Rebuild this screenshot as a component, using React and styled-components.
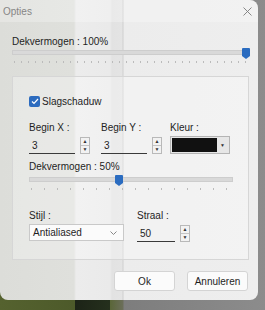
import React from 'react';
import styled, { createGlobalStyle } from 'styled-components'

const GlobalStyle = createGlobalStyle`
  html, body {
    margin: 0;
    padding: 0;
  }
  body {
    width: 265px;
    height: 310px;
    overflow: hidden;
    font-family: "Liberation Sans", Arial, sans-serif;
    background: linear-gradient(to right, #55622f 0, #4d5a2a 75px, #1c2317 75px, #25301d 110px, #5a6638 110px, #6b6e5a 123px, #7d7d7d 124px, #8c8c8c 100%);
  }
`

const Dialog = styled.div`
  width: 258px;
  height: 300px;
  border-radius: 0 8px 8px 8px;
  overflow: hidden;
  display: flex;
  flex-direction: column;
  background: linear-gradient(to right, #dcddd9 0, #dfe0dc 74px, #ececec 76px, #eaeaea 110px, #e2e2e2 112px, #e4e4e4 122px, #cfcfcf 123px, #ececec 124px, #eeeeee 100%);
`

const TitleBar = styled.div`
  height: 22px;
  flex: none;
  display: flex;
  align-items: center;
  justify-content: space-between;
  padding: 0 6px 0 3px;
  background: rgba(255, 255, 255, 0.25);
  color: #858585;
  font-size: 10px;
`

const CloseIcon = styled.svg`
  width: 9px;
  height: 9px;
  margin-top: 1px;
`

const Content = styled.div`
  flex: 1;
  display: flex;
  flex-direction: column;
  padding: 13px 10px 0 12px;
`

const Label = styled.div`
  font-size: 10px;
  line-height: 13px;
  color: #1e1e1e;
  white-space: nowrap;
`

const SliderWrap = styled.div`
  position: relative;
  width: ${p => p.$width}px;
  height: 16px;
  margin-top: 1px;
`

const Track = styled.div`
  height: 5px;
  background: #d9d9d9;
  border: 1px solid #cdcdcd;
  box-sizing: border-box;
  margin-top: 1px;
`

const Ticks = styled.div`
  height: 2px;
  margin: 6px 2px 0;
  background: repeating-linear-gradient(to right, #bbbbbb 0, #bbbbbb 1px, transparent 1px, transparent ${p => p.$step}px);
`

const Thumb = styled.svg`
  position: absolute;
  top: -1px;
  width: 8px;
  height: 11px;
`

const GroupBox = styled.div`
  margin-top: 11px;
  width: 237px;
  height: 184px;
  box-sizing: border-box;
  border: 1px solid #d6d6d6;
  background: rgba(255, 255, 255, 0.3);
  padding: 18px 0 0 16px;
  display: flex;
  flex-direction: column;
`

const CheckRow = styled.label`
  display: flex;
  align-items: center;
  gap: 2px;
  font-size: 10px;
  line-height: 13px;
  color: #1e1e1e;
`

const CheckBox = styled.span`
  width: 11px;
  height: 11px;
  border-radius: 2px;
  background: #2d6cbf;
  display: flex;
  align-items: center;
  justify-content: center;
`

const FieldRow = styled.div`
  display: flex;
  margin-top: ${p => p.$top}px;
`

const Field = styled.div`
  display: flex;
  flex-direction: column;
  gap: 2px;
  margin-right: ${p => p.$mr || 0}px;
`

const SpinBox = styled.div`
  display: flex;
  align-items: center;
  gap: 5px;
  height: 18px;
`

const SpinInput = styled.div`
  width: ${p => p.$width}px;
  height: 17px;
  box-sizing: border-box;
  border-bottom: 1px solid #3a3a3a;
  padding: 3px 0 0 3px;
  font-size: 10px;
  color: #1e1e1e;
`

const Spinner = styled.div`
  width: 8px;
  height: 15px;
  display: flex;
  flex-direction: column;
  border: 1px solid #b9b9b9;
  background: #f2f2f2;
`

const SpinHalf = styled.div`
  flex: 1;
  display: flex;
  align-items: center;
  justify-content: center;
  font-size: 5px;
  color: #333;
  line-height: 1;
  & + & {
    border-top: 1px solid #c4c4c4;
  }
`

const ColorPicker = styled.div`
  width: 60px;
  height: 18px;
  box-sizing: border-box;
  border: 1px solid #b4b4b4;
  background: #e6e6e6;
  display: flex;
  padding: 1px;
`

const Swatch = styled.div`
  width: 45px;
  background: #111;
`

const DropArrow = styled.div`
  flex: 1;
  display: flex;
  align-items: center;
  justify-content: center;
  font-size: 5px;
  color: #333;
`

const Select = styled.div`
  width: 95px;
  height: 17px;
  box-sizing: border-box;
  border: 1px solid #c9c9c9;
  background: #fbfbfb;
  display: flex;
  align-items: center;
  justify-content: space-between;
  padding: 0 6px 0 3px;
  font-size: 10px;
  color: #1e1e1e;
`

const ButtonRow = styled.div`
  display: flex;
  justify-content: flex-end;
  gap: 12px;
  margin-top: 11px;
`

const Button = styled.button`
  width: 61px;
  height: 20px;
  border: 1px solid #d4d4d4;
  border-radius: 3px;
  background: #fbfbfb;
  font-family: inherit;
  font-size: 10px;
  color: #1e1e1e;
  padding: 0;
`

const Slider = ({ width, value, step }) => (
  <SliderWrap $width={width}>
    <Track />
    <Ticks $step={step} />
    <Thumb viewBox="0 0 8 11" style={{ left: (width - 8) * value / 100 }}>
      <path d="M1 0 H7 Q8 0 8 1 V8 L4 11 L0 8 V1 Q0 0 1 0 Z" fill="#2b6cc0" />
    </Thumb>
  </SliderWrap>
)

const Spin = ({ value, width }) => (
  <SpinBox>
    <SpinInput $width={width}>{value}</SpinInput>
    <Spinner>
      <SpinHalf>▲</SpinHalf>
      <SpinHalf>▼</SpinHalf>
    </Spinner>
  </SpinBox>
)

const App = () => {
  return (
    <>
      <GlobalStyle />
      <Dialog>
        <TitleBar>
          <span>Opties</span>
          <CloseIcon viewBox="0 0 9 9">
            <path d="M0.5 0.5 L8.5 8.5 M8.5 0.5 L0.5 8.5" stroke="#7a7a7a" strokeWidth="0.9" />
          </CloseIcon>
        </TitleBar>
        <Content>
          <Label>Dekvermogen : 100%</Label>
          <Slider width={238} value={100} step={7} />
          <GroupBox>
            <CheckRow>
              <CheckBox>
                <svg width="8" height="7" viewBox="0 0 8 7">
                  <path d="M1 3.5 L3 5.5 L7 1" stroke="#fff" strokeWidth="1.2" fill="none" />
                </svg>
              </CheckBox>
              Slagschaduw
            </CheckRow>
            <FieldRow $top={13}>
              <Field $mr={11}>
                <Label>Begin X :</Label>
                <Spin value="3" width={46} />
              </Field>
              <Field $mr={8}>
                <Label>Begin Y :</Label>
                <Spin value="3" width={46} />
              </Field>
              <Field>
                <Label>Kleur :</Label>
                <ColorPicker>
                  <Swatch />
                  <DropArrow>▼</DropArrow>
                </ColorPicker>
              </Field>
            </FieldRow>
            <FieldRow $top={6}>
              <Field>
                <Label>Dekvermogen : 50%</Label>
                <Slider width={204} value={44} step={13} />
              </Field>
            </FieldRow>
            <FieldRow $top={17}>
              <Field $mr={13}>
                <Label>Stijl :</Label>
                <Select>
                  Antialiased
                  <svg width="7" height="4" viewBox="0 0 7 4">
                    <path d="M0.5 0.5 L3.5 3.5 L6.5 0.5" stroke="#888" fill="none" />
                  </svg>
                </Select>
              </Field>
              <Field>
                <Label>Straal :</Label>
                <Spin value="50" width={38} />
              </Field>
            </FieldRow>
          </GroupBox>
          <ButtonRow>
            <Button>Ok</Button>
            <Button>Annuleren</Button>
          </ButtonRow>
        </Content>
      </Dialog>
    </>
  )
}

export default App;
